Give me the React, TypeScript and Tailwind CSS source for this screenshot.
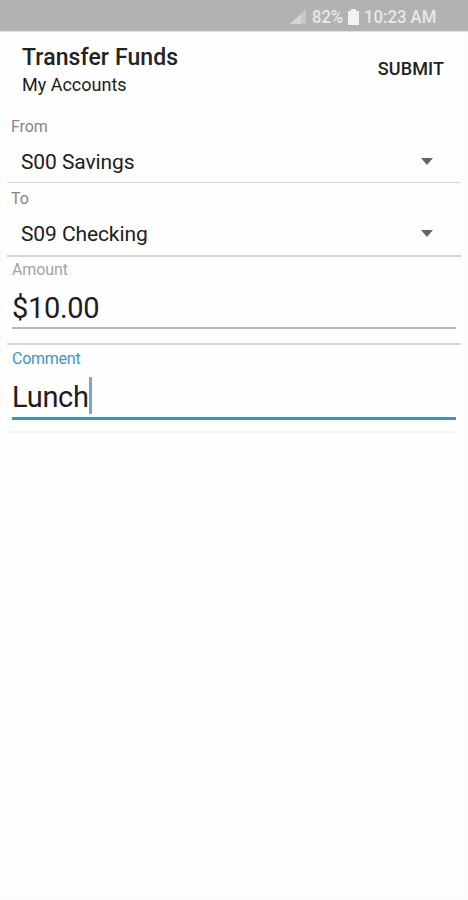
type Account = { label: string; value: string; row: string };

const accounts: Account[] = [
  { label: "From", value: "S00 Savings", row: "h-[67px] border-b" },
  { label: "To", value: "S09 Checking", row: "h-[74px] border-b-2 pt-[5px]" },
];

function StatusBar() {
  return (
    <div className="flex h-[31px] items-center justify-end bg-[#b2b2b2] pr-[31px] pt-0.5 text-[#e8e8e8]">
      <svg className="mr-[6px] h-[15px] w-4" viewBox="0 0 16 15">
        <path d="M16 0v15H0z" fill="#c8c8c8" />
        <path d="M11 5v10H0z" fill="#d6d6d6" />
      </svg>
      <span className="w-[32px] origin-left scale-x-[.87] whitespace-nowrap pt-px text-[19px] font-medium">82%</span>
      <svg className="ml-1 mr-[5px] h-4 w-[11px]" viewBox="0 0 11 16" fill="#f2f2f2">
        <path d="M3 0h5v2h3v14H0V2h3z" />
      </svg>
      <span className="w-[73px] origin-left scale-x-[.88] whitespace-nowrap pt-px text-[19px] font-medium">10:23 AM</span>
    </div>
  );
}

function AccountSelect({ label, value, row }: Account) {
  return (
    <div className={`mx-[7px] border-[#d6d6d6] ${row}`}>
      <div className="pl-1 pt-px text-[16px] leading-5 tracking-[-0.1px] text-[#858585]">{label}</div>
      <div className="mt-[11px] flex items-center justify-between pl-3.5 pr-7">
        <span className="text-[21px] leading-7 tracking-[-0.1px] text-[#202020]">{value}</span>
        <svg className="mb-px h-[7px] w-3" viewBox="0 0 12 7">
          <path d="M0 0h12L6 7z" fill="#646464" />
        </svg>
      </div>
    </div>
  );
}

export default function App() {
  return (
    <main className="h-[900px] w-[468px] overflow-hidden bg-[#fefefe] font-['Roboto',sans-serif]">
      <StatusBar />
      <div className="h-[869px] border-x-2 border-b-4 border-[#fbfbfb]">
        <div className="-mx-0.5">
          <header className="flex h-[85px] justify-between border-t border-[#e2e2e2] pl-[22px] pr-6">
            <div className="pt-3">
              <h1 className="text-[23px] font-medium leading-7 tracking-[0.1px] text-[#222]">Transfer Funds</h1>
              <p className="text-[18px] leading-[26px] text-[#1c1c1c]">My Accounts</p>
            </div>
            <button className="mt-[23px] h-7 text-[18px] font-medium leading-7 tracking-[0.1px] text-[#222]">SUBMIT</button>
          </header>

          {accounts.map((account) => (
            <AccountSelect key={account.label} {...account} />
          ))}

          <div className="mx-[7px] h-[88px] border-b-2 border-[#d8d8d8] pl-[5px] pr-[5px] pt-[3px]">
            <div className="text-[16px] leading-5 tracking-[-0.1px] text-[#a3a3a3]">Amount</div>
            <div className="mt-2 h-[41px] border-b-2 border-[#b9b9b9] text-[29px] leading-10 tracking-[-0.3px] text-[#1c1c1c]">
              $10.00
            </div>
          </div>

          <div className="mx-[7px] h-[88px] border-b-2 border-[#f6f6f6] pl-[5px] pr-[5px] pt-1">
            <div className="text-[16px] leading-5 tracking-[-0.25px] text-[#3d96c9]">Comment</div>
            <div className="mt-2 flex h-[43px] border-b-[3px] border-[#3499c2] text-[29px] leading-10 tracking-[-0.3px] text-[#1c1c1c]">
              <span>Lunch</span>
              <span className="h-[37px] w-[3px] bg-[#76a6d6]" />
            </div>
          </div>
        </div>
      </div>
    </main>
  );
}
